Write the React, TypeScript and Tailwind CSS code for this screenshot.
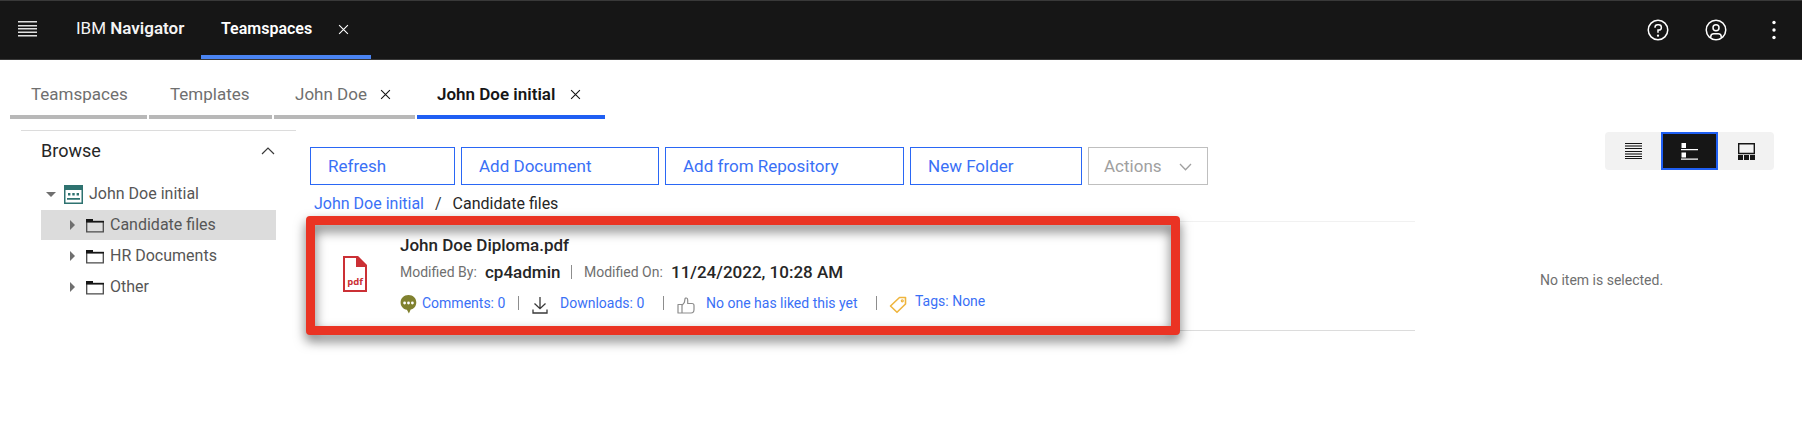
import type { ReactNode } from "react";

function CloseIcon() {
  return (
    <svg width="11" height="11" viewBox="0 0 12 12" fill="none" stroke="currentColor" strokeWidth="1.2" aria-hidden="true">
      <path d="M1.2 1.2 10.8 10.8M10.8 1.2 1.2 10.8" />
    </svg>
  );
}

function HelpIcon() {
  return (
    <svg width="24" height="24" viewBox="0 0 32 32" fill="currentColor" aria-hidden="true">
      <path d="M16 2a14 14 0 1 0 14 14A14 14 0 0 0 16 2Zm0 26a12 12 0 1 1 12-12 12 12 0 0 1-12 12Z" />
      <circle cx="16" cy="23.5" r="1.5" />
      <path d="M17 8h-1.5a4.49 4.49 0 0 0-4.5 4.5v.5h2v-.5a2.5 2.5 0 0 1 2.5-2.5H17a2.5 2.5 0 0 1 0 5h-2v4.5h2V17a4.5 4.5 0 0 0 0-9Z" />
    </svg>
  );
}

function UserIcon() {
  return (
    <svg width="24" height="24" viewBox="0 0 32 32" fill="currentColor" aria-hidden="true">
      <path d="M16 8a5 5 0 1 0 5 5 5 5 0 0 0-5-5Zm0 8a3 3 0 1 1 3-3 3 3 0 0 1-3 3Z" />
      <path d="M16 2a14 14 0 1 0 14 14A14.016 14.016 0 0 0 16 2Zm-6 24.377V25a3.003 3.003 0 0 1 3-3h6a3.003 3.003 0 0 1 3 3v1.377a11.899 11.899 0 0 1-12 0Zm13.993-1.451A5.002 5.002 0 0 0 19 20h-6a5.002 5.002 0 0 0-4.992 4.926 12 12 0 1 1 15.985 0Z" />
    </svg>
  );
}

function FolderIcon() {
  return (
    <svg width="18" height="15" viewBox="0 0 18 15" aria-hidden="true">
      <path d="M.7 3.500h16.600v10.300H.7z" fill="none" stroke="#4a4a4a" strokeWidth="1.300" />
      <path d="M0 1h7v2h11v1.500H0z" fill="#161616" />
    </svg>
  );
}

function TeamspaceIcon() {
  return (
    <svg width="19" height="19" viewBox="0 0 19 19" aria-hidden="true">
      <path d="M0 0h19v19H0z" fill="#2e7270" />
      <path d="M1.500 5h16v12.500h-16z" fill="#fff" />
      <path d="M4 8h2.400v2.400H4zM8.300 8h2.400v2.400H8.300zM12.600 8H15v2.400h-2.400zM3 13h13v1.800H3z" fill="#2e7270" />
    </svg>
  );
}

function PdfIcon() {
  return (
    <svg width="24" height="36" viewBox="0 0 24 36" aria-hidden="true">
      <path d="M1 1h13.500L23 9.500V35H1z" fill="#fff" stroke="#cb3035" strokeWidth="2" />
      <path d="M13 0h1.800L24 9.500V11H13z" fill="#cb3035" />
      <text x="12" y="28.500" textAnchor="middle" fontFamily="Open Sans, sans-serif" fontSize="9.500" fontWeight="700" fill="#cb3035">pdf</text>
    </svg>
  );
}

function CommentIcon() {
  return (
    <svg width="17" height="19" viewBox="0 0 17 19" aria-hidden="true">
      <path d="M8.500 0C13.200 0 16.300 3.300 16.300 7.500c0 3.800-2.500 6.300-5.600 7.100L8.900 18.500 6.900 14.800C3.200 14.200.6 11.300.6 7.500.6 3.300 3.800 0 8.500 0Z" fill="#80812f" />
      <g fill="#fff">
        <circle cx="4.600" cy="8" r="1.400" />
        <circle cx="8.500" cy="8" r="1.400" />
        <circle cx="12.400" cy="8" r="1.400" />
      </g>
    </svg>
  );
}

function DownloadIcon() {
  return (
    <svg width="16" height="18" viewBox="0 0 16 18" fill="none" stroke="#393939" strokeWidth="1.300" aria-hidden="true">
      <path d="M8 1v11M2.500 7.500 8 12.700l5.500-5.200" />
      <path d="M1 13.500V17h14v-3.500" />
    </svg>
  );
}

function LikeIcon() {
  return (
    <svg width="18" height="17" viewBox="0 0 18 17" fill="none" stroke="#8d8d8d" strokeWidth="1.200" strokeLinejoin="round" aria-hidden="true">
      <path d="M1 7.500h4V16H1zM5 8.500 7.400 5.300 8 1.800C8.200.6 10.700.6 10.700 2.900V6.500h4.300c1.300 0 2 .9 2 2v4c0 2-1.300 3.500-3 3.500H5" />
    </svg>
  );
}

function TagIcon() {
  return (
    <svg width="18" height="18" viewBox="0 0 18 18" fill="none" stroke="#efb53e" strokeWidth="1.600" strokeLinejoin="round" aria-hidden="true">
      <path d="M10.500 1.500H16.500V8L8 16.300 1.500 10z" />
      <circle cx="13.300" cy="4.800" r="1" strokeWidth="1.200" />
    </svg>
  );
}

function TreeRow({ label, selected = false }: { label: string; selected?: boolean }) {
  return (
    <li>
      <button
        type="button"
        className={`flex h-[30px] w-full items-center pl-[29px] text-left text-[#565656] ${selected ? "bg-[#dcdcdc]" : ""}`}
      >
        <svg width="5" height="10" viewBox="0 0 5 10" className="mr-[11px]" aria-hidden="true">
          <path d="M0 0 5 5 0 10z" fill="#6f6f6f" />
        </svg>
        <FolderIcon />
        <span className="ml-[6px] text-base">{label}</span>
      </button>
    </li>
  );
}

function ToolbarButton({ children, width }: { children: ReactNode; width: string }) {
  return (
    <button type="button" className={`h-[38px] border border-[#2a67f5] bg-white pt-px pl-[17px] text-left text-[#3a70f6] ${width}`}>
      {children}
    </button>
  );
}

function Divider() {
  return <span className="h-[14px] w-px bg-[#8d8d8d]" />;
}

function Header() {
  return (
    <header className="flex h-[60px] items-stretch border-y border-[#393939] bg-[#161616] pr-4 text-white">
      <button type="button" aria-label="Open menu" className="flex w-[56px] items-center pb-[2px] pl-[18px]">
        <svg width="19" height="16" viewBox="0 0 19 16" fill="#e0e0e0" aria-hidden="true">
          <path d="M0 0h19v1.600H0zM0 4h19v1.600H0zM0 7h19v1.600H0zM0 10.500h19v1.600H0zM0 14h19v1.600H0z" />
        </svg>
      </button>
      <a href="#home" className="flex w-[145px] items-center pb-[2px] pl-5 text-[17px] text-[#f4f4f4]">
        IBM&nbsp;<span className="font-semibold">Navigator</span>
      </a>
      <div className="flex w-[170px] items-center justify-between border-b-4 border-[#4a84f2] pr-[22px] pl-5">
        <button type="button" className="pt-[2px] text-base font-semibold">Teamspaces</button>
        <button type="button" aria-label="Close Teamspaces" className="pt-[2px]"><CloseIcon /></button>
      </div>
      <div className="ml-auto flex items-center gap-[34px]">
        <button type="button" aria-label="Help"><HelpIcon /></button>
        <button type="button" aria-label="User profile"><UserIcon /></button>
        <button type="button" aria-label="More actions" className="flex w-6 justify-center">
          <svg width="4" height="20" viewBox="0 0 4 20" fill="currentColor" aria-hidden="true">
            <circle cx="2" cy="2.500" r="1.700" />
            <circle cx="2" cy="10" r="1.700" />
            <circle cx="2" cy="17.500" r="1.700" />
          </svg>
        </button>
      </div>
    </header>
  );
}

function Tabs() {
  return (
    <nav className="flex h-[59px] gap-[2px] pl-[10px] text-[17px] text-[#6f6f6f]">
      <div className="flex w-[137px] items-center border-b-[4px] border-[#b8b8b8] pt-[14px] pl-[21px]">
        <button type="button">Teamspaces</button>
      </div>
      <div className="flex w-[123px] items-center border-b-[4px] border-[#b8b8b8] pt-[14px] pl-[21px]">
        <button type="button">Templates</button>
      </div>
      <div className="flex w-[141px] items-center justify-between border-b-[4px] border-[#b8b8b8] pt-[14px] pr-6 pl-[21px]">
        <button type="button">John Doe</button>
        <button type="button" aria-label="Close John Doe" className="text-[#161616]"><CloseIcon /></button>
      </div>
      <div className="flex w-[188px] items-center justify-between border-b-[4px] border-[#1f5ff3] pt-[14px] pr-6 pl-5 text-[#161616]">
        <button type="button" className="font-semibold">John Doe initial</button>
        <button type="button" aria-label="Close John Doe initial"><CloseIcon /></button>
      </div>
    </nav>
  );
}

function Sidebar() {
  return (
    <aside className="w-[296px] shrink-0 pt-[11px] pl-[21px]">
      <div className="border-t border-[#dcdcdc] pr-5 pl-5">
        <button type="button" className="flex h-10 w-full items-center justify-between text-lg text-[#262626]">
          Browse
          <svg width="14" height="8" viewBox="0 0 14 8" fill="none" stroke="#393939" strokeWidth="1.200" className="mr-[1px]" aria-hidden="true">
            <path d="M1 7 7 1l6 6" />
          </svg>
        </button>
        <button type="button" className="mt-2 flex h-[30px] w-full items-center pl-[5px] text-left text-[#565656]">
          <svg width="10" height="5" viewBox="0 0 10 5" className="mr-2" aria-hidden="true">
            <path d="M0 0h10L5 5z" fill="#6f6f6f" />
          </svg>
          <TeamspaceIcon />
          <span className="ml-[6px] text-base">John Doe initial</span>
        </button>
        <ul className="mt-px flex flex-col gap-px">
          <TreeRow label="Candidate files" selected />
          <TreeRow label="HR Documents" />
          <TreeRow label="Other" />
        </ul>
      </div>
    </aside>
  );
}

function FileItem() {
  return (
    <article className="relative h-[110px] border-y border-t-[#f1f1f1] border-b-[#dcdcdc]">
      <div className="pointer-events-none absolute -top-[6px] -left-1 h-[119px] w-[874px] rounded border-[9px] border-[#ea3323] drop-shadow-[0_6px_6px_rgba(0,0,0,0.55)]" />
      <div className="flex pl-[33px]">
        <div className="pt-[34px]"><PdfIcon /></div>
        <div className="pt-[11px] pl-[33px]">
          <a href="#file" className="block h-6 text-[17px] leading-6 font-medium text-[#262626]">John Doe Diploma.pdf</a>
          <div className="mt-[3px] flex h-6 items-center text-sm text-[#6f6f6f]">
            <span className="w-[85px]">Modified By:</span>
            <span className="w-[86px] text-[17px] font-medium text-[#262626]">cp4admin</span>
            <Divider />
            <span className="w-[99px] pl-3">Modified On:</span>
            <span className="text-[17px] font-medium text-[#262626]">11/24/2022, 10:28 AM</span>
          </div>
          <div className="mt-[7px] flex h-6 items-center text-sm text-[#3a70f6]">
            <span className="pt-[2px]"><CommentIcon /></span>
            <a href="#comments" className="w-[101px] pl-[5px]">Comments: 0</a>
            <Divider />
            <span className="pt-1 pr-3 pl-[13px]"><DownloadIcon /></span>
            <a href="#downloads" className="w-[103px]">Downloads: 0</a>
            <Divider />
            <span className="pt-1 pr-[11px] pl-[13px]"><LikeIcon /></span>
            <a href="#likes" className="w-[170px]">No one has liked this yet</a>
            <Divider />
            <span className="pt-1 pr-2 pl-3"><TagIcon /></span>
            <a href="#tags" className="pb-1">Tags: None</a>
          </div>
        </div>
      </div>
    </article>
  );
}

function ViewSwitcher() {
  return (
    <div className="flex h-[38px] w-[169px] overflow-hidden rounded-[4px] bg-[#f2f2f2]">
      <button type="button" aria-label="Details view" className="flex flex-1 items-center justify-center">
        <svg width="17" height="16" viewBox="0 0 17 16" fill="#161616" shapeRendering="crispEdges" aria-hidden="true">
          <path d="M0 0h17v1H0zM0 5h17v1H0zM0 8h17v1H0zM0 13h17v1H0zM0 15h17v1H0z" />
          <path d="M0 2h17v2H0zM0 10h17v2H0z" fill="#777" />
        </svg>
      </button>
      <button type="button" aria-label="List view" aria-pressed="true" className="flex w-[57px] items-center justify-center border-2 border-[#1f5ff3] bg-[#161616]">
        <svg width="17" height="17" viewBox="0 0 17 17" fill="#fff" aria-hidden="true">
          <path d="M.5 0h4.500v5H.5zM.5 9.500h4.500v5H.5zM0 6h17v1.200H0zM0 15.600h17v1.200H0z" />
        </svg>
      </button>
      <button type="button" aria-label="Gallery view" className="flex flex-1 items-center justify-center">
        <svg width="17" height="17" viewBox="0 0 17 17" fill="#161616" aria-hidden="true">
          <path d="M.700.700h15.600v9.800H.700z" fill="none" stroke="#161616" strokeWidth="1.400" />
          <path d="M0 12h5v5H0zM6 12h5v5H6zM12 12h5v5h-5z" />
        </svg>
      </button>
    </div>
  );
}

export default function App() {
  return (
    <div className="min-h-screen bg-white font-['Roboto','Liberation_Sans',sans-serif]">
      <Header />
      <Tabs />
      <main className="flex">
        <Sidebar />
        <section className="min-w-0 flex-1 pt-7 pl-[14px]">
          <div className="flex gap-[6px] text-[17px]">
            <ToolbarButton width="w-[145px]">Refresh</ToolbarButton>
            <ToolbarButton width="w-[198px]">Add Document</ToolbarButton>
            <ToolbarButton width="w-[239px]">Add from Repository</ToolbarButton>
            <ToolbarButton width="w-[172px]">New Folder</ToolbarButton>
            <button type="button" disabled className="flex h-[38px] w-[120px] items-center justify-between border border-[#bfbfbf] pt-px pr-[15px] pl-[15px] text-[#a0a0a0]">
              Actions
              <svg width="13" height="8" viewBox="0 0 13 8" fill="none" stroke="#a0a0a0" strokeWidth="1.300" aria-hidden="true">
                <path d="m1 1 5.500 5.800L12 1" />
              </svg>
            </button>
          </div>
          <nav aria-label="Breadcrumb" className="flex h-9 items-center pt-px pl-1 text-base">
            <a href="#root" className="text-[#3a70f6]">John Doe initial</a>
            <span className="px-[11px] text-[#393939]">/</span>
            <span className="text-[#262626]">Candidate files</span>
          </nav>
          <FileItem />
        </section>
        <section className="flex w-[387px] shrink-0 flex-col items-end pt-[13px] pr-7">
          <ViewSwitcher />
          <p className="mt-[100px] w-[234px] text-sm text-[#6f6f6f]">No item is selected.</p>
        </section>
      </main>
    </div>
  );
}
